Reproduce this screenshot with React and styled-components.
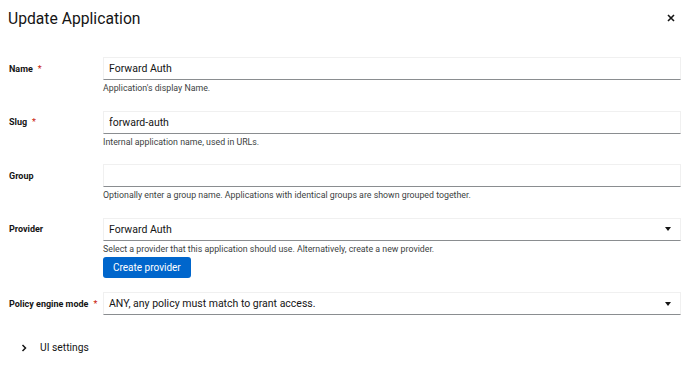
import React from 'react';
import styled, { createGlobalStyle } from 'styled-components';

const Global = createGlobalStyle`
  body {
    margin: 0;
    background: #fff;
    font-family: Roboto, "Liberation Sans", sans-serif;
    color: #151515;
  }
`

const Page = styled.div`
  width: 690px;
  height: 381px;
  box-sizing: border-box;
  padding: 0 9px 0 9px;
  overflow: hidden;
`

const Header = styled.div`
  display: flex;
  justify-content: space-between;
  align-items: center;
  height: 36px;
  padding-right: 5px;
`

const Title = styled.h1`
  margin: 0 0 0 -1px;
  font-size: 15.7px;
  font-weight: 400;
  color: #151515;
`

const Close = styled.button`
  border: none;
  background: none;
  padding: 0;
  display: flex;
  width: 10px;
  height: 10px;
  align-items: center;
  justify-content: center;
`

const Form = styled.div`
  display: flex;
  flex-direction: column;
  gap: 16.5px;
  padding-top: 21px;
`

const Row = styled.div`
  display: grid;
  grid-template-columns: 94px 1fr;
  align-items: start;
`

const Label = styled.div`
  height: 23px;
  display: flex;
  align-items: center;
  font-size: 9px;
  font-weight: 700;
  color: #151515;
  white-space: nowrap;
`

const Req = styled.span`
  color: #c9190b;
  margin-left: 5px;
  font-weight: 400;
`

const Field = styled.div`
  display: flex;
  flex-direction: column;
`

const Input = styled.input`
  box-sizing: border-box;
  height: 23px;
  width: 100%;
  border: 1px solid #f0f0f0;
  border-bottom-color: #8a8d90;
  padding: 0 5px;
  font-family: inherit;
  font-size: 10.5px;
  color: #151515;
  outline: none;
  background: #fff;
`

const Select = styled.div`
  box-sizing: border-box;
  height: 23px;
  border: 1px solid #f0f0f0;
  border-bottom-color: #8a8d90;
  padding: 0 9px 0 5px;
  display: flex;
  align-items: center;
  justify-content: space-between;
  font-size: 10.5px;
  color: #151515;
`

const Caret = styled.span`
  width: 0;
  height: 0;
  border-left: 3.5px solid transparent;
  border-right: 3.5px solid transparent;
  border-top: 4px solid #151515;
`

const Help = styled.div`
  margin-top: 3px;
  font-size: 8.8px;
  line-height: 11px;
  color: #3c3f42;
`

const Button = styled.button`
  align-self: flex-start;
  margin: 2px 0 -2px;
  height: 21px;
  padding: 0 10px;
  border: none;
  border-radius: 3px;
  background: #06c;
  color: #fff;
  font-family: inherit;
  font-size: 10px;
`

const Expander = styled.div`
  display: flex;
  align-items: center;
  gap: 13px;
  margin-top: 26px;
  padding-left: 12px;
  font-size: 10.3px;
  color: #151515;
`

const FormRow = ({ label, required, children }) => (
  <Row>
    <Label>
      {label}
      {required ? <Req>*</Req> : null}
    </Label>
    <Field>{children}</Field>
  </Row>
)

const App = () => {
  return (
    <Page>
      <Global />
      <Header>
        <Title>Update Application</Title>
        <Close aria-label="Close">
          <svg width="8" height="8" viewBox="0 0 8 8">
            <path d="M1 1L7 7M7 1L1 7" stroke="#151515" strokeWidth="1.6" />
          </svg>
        </Close>
      </Header>
      <Form>
        <FormRow label="Name" required>
          <Input readOnly defaultValue="Forward Auth" />
          <Help>Application's display Name.</Help>
        </FormRow>
        <FormRow label="Slug" required>
          <Input readOnly defaultValue="forward-auth" />
          <Help>Internal application name, used in URLs.</Help>
        </FormRow>
        <FormRow label="Group">
          <Input readOnly defaultValue="" />
          <Help>Optionally enter a group name. Applications with identical groups are shown grouped together.</Help>
        </FormRow>
        <FormRow label="Provider">
          <Select>
            Forward Auth
            <Caret />
          </Select>
          <Help>Select a provider that this application should use. Alternatively, create a new provider.</Help>
          <Button>Create provider</Button>
        </FormRow>
        <FormRow label="Policy engine mode" required>
          <Select>
            ANY, any policy must match to grant access.
            <Caret />
          </Select>
        </FormRow>
      </Form>
      <Expander>
        <svg width="6" height="8" viewBox="0 0 6 8">
          <path d="M1.5 1L4.5 4L1.5 7" stroke="#151515" strokeWidth="1.5" fill="none" />
        </svg>
        UI settings
      </Expander>
    </Page>
  )
}

export default App;
